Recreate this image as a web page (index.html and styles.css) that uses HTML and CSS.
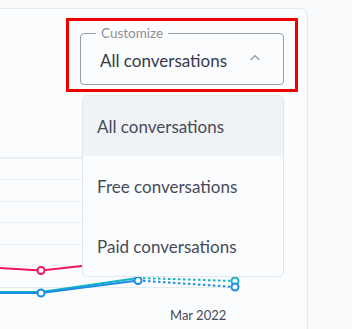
FILE: index.html
```html
<!DOCTYPE html>
<html>
<head>
<meta charset="utf-8">
<link rel="stylesheet" href="styles.css">
</head>
<body>
<div class="card">
  <div class="header">
    <div class="highlight">
      <fieldset class="select">
        <legend class="legend">Customize</legend>
        <span class="value">All conversations</span>
        <svg class="chevron" width="12" height="7" viewBox="0 0 12 7"><path d="M1.5 6 L6 1.8 L10.5 6" fill="none" stroke="#9a9ea6" stroke-width="1.4"/></svg>
      </fieldset>
    </div>
  </div>
  <svg class="chart" width="316" height="232" viewBox="0 0 316 232">
    <g stroke="#edf0f3" stroke-width="1">
      <line x1="0" y1="66" x2="244" y2="66" stroke-width="2"/>
      <line x1="0" y1="87.5" x2="244" y2="87.5"/>
      <line x1="0" y1="109.5" x2="244" y2="109.5"/>
      <line x1="0" y1="130.5" x2="244" y2="130.5"/>
      <line x1="0" y1="152.5" x2="244" y2="152.5"/>
      <line x1="0" y1="173.5" x2="244" y2="173.5"/>
      <line x1="0" y1="195.5" x2="244" y2="195.5" stroke="#e6eaee"/>
    </g>
    <polyline points="0,200 50,200 147,186" fill="none" stroke="#14b3c4" stroke-width="2"/>
    <line x1="147" y1="186" x2="244" y2="189" stroke="#14b3c4" stroke-width="2" stroke-dasharray="2.5 2.5"/>
    <polyline points="0,175.5 50,178.5 91,174 147,170" fill="none" stroke="#f2175c" stroke-width="2"/>
    <polyline points="0,201 50,201 147,188.5" fill="none" stroke="#1a8be6" stroke-width="2"/>
    <line x1="147" y1="188.5" x2="244" y2="195" stroke="#1a8be6" stroke-width="2" stroke-dasharray="2.5 2.5"/>
    <circle cx="50" cy="178.5" r="3.5" fill="#fff" stroke="#f2175c" stroke-width="2"/>
    <circle cx="50" cy="201" r="3.5" fill="#fff" stroke="#1a8be6" stroke-width="2"/>
    <circle cx="147" cy="188.5" r="3.5" fill="#fff" stroke="#1a8be6" stroke-width="2"/>
    <circle cx="244" cy="189" r="3.5" fill="#fff" stroke="#14b3c4" stroke-width="2"/>
    <circle cx="244" cy="195" r="3.5" fill="#fff" stroke="#1a8be6" stroke-width="2"/>
    <text class="axis-label" x="179" y="228">Mar 2022</text>
  </svg>
  <ul class="menu">
    <li class="item active">All conversations</li>
    <li class="item">Free conversations</li>
    <li class="item">Paid conversations</li>
  </ul>
</div>
</body>
</html>
```
FILE: styles.css
```css
html, body {
  margin: 0;
  padding: 0;
  background: #f8f9fb;
  overflow: hidden;
  height: 329px;
}
body {
  padding-top: 8px;
  box-sizing: border-box;
  font-family: "Lato", "Noto Sans", sans-serif;
}
.card {
  position: relative;
  margin-left: -10px;
  width: 318px;
  height: 321px;
  border: 1px solid #e3e8ee;
  border-bottom: none;
  border-radius: 8px 8px 0 0;
  background: #fbfcfd;
  box-sizing: border-box;
  overflow: hidden;
}
.header {
  display: flex;
  justify-content: flex-end;
  padding: 9px 9px 0 0;
}
.highlight {
  border: 3px solid #f20000;
  padding: 6px 11px 4px 11px;
}
.select {
  margin: 0;
  width: 204px;
  height: 58px;
  box-sizing: border-box;
  border: 1px solid #9b9ea4;
  border-radius: 4px;
  padding: 0 19px 0 19px;
  display: flex;
  align-items: center;
  justify-content: space-between;
}
.legend {
  padding: 0 5px;
  margin-left: -4px;
  font-size: 13.5px;
  color: #8e9097;
  line-height: 13px;
}
.value {
  font-size: 17px;
  color: #353a4a;
  margin-top: -4px;
}
.chevron {
  margin-top: -10px;
  margin-right: 3px;
}
.chart {
  display: block;
}
.menu {
  position: absolute;
  left: 91px;
  top: 86px;
  width: 202px;
  margin: 0;
  padding: 0;
  list-style: none;
  background: #fbfcfd;
  border: 1px solid #e3e6eb;
  border-radius: 5px;
  overflow: hidden;
  box-sizing: border-box;
}
.item {
  height: 60px;
  display: flex;
  align-items: center;
  padding-left: 14px;
  font-size: 17px;
  color: #474b57;
}
.item.active {
  background: #eff2f6;
}
.axis-label {
  font-family: "Lato", "Noto Sans", sans-serif;
  font-size: 13px;
  fill: #464a55;
}
```
